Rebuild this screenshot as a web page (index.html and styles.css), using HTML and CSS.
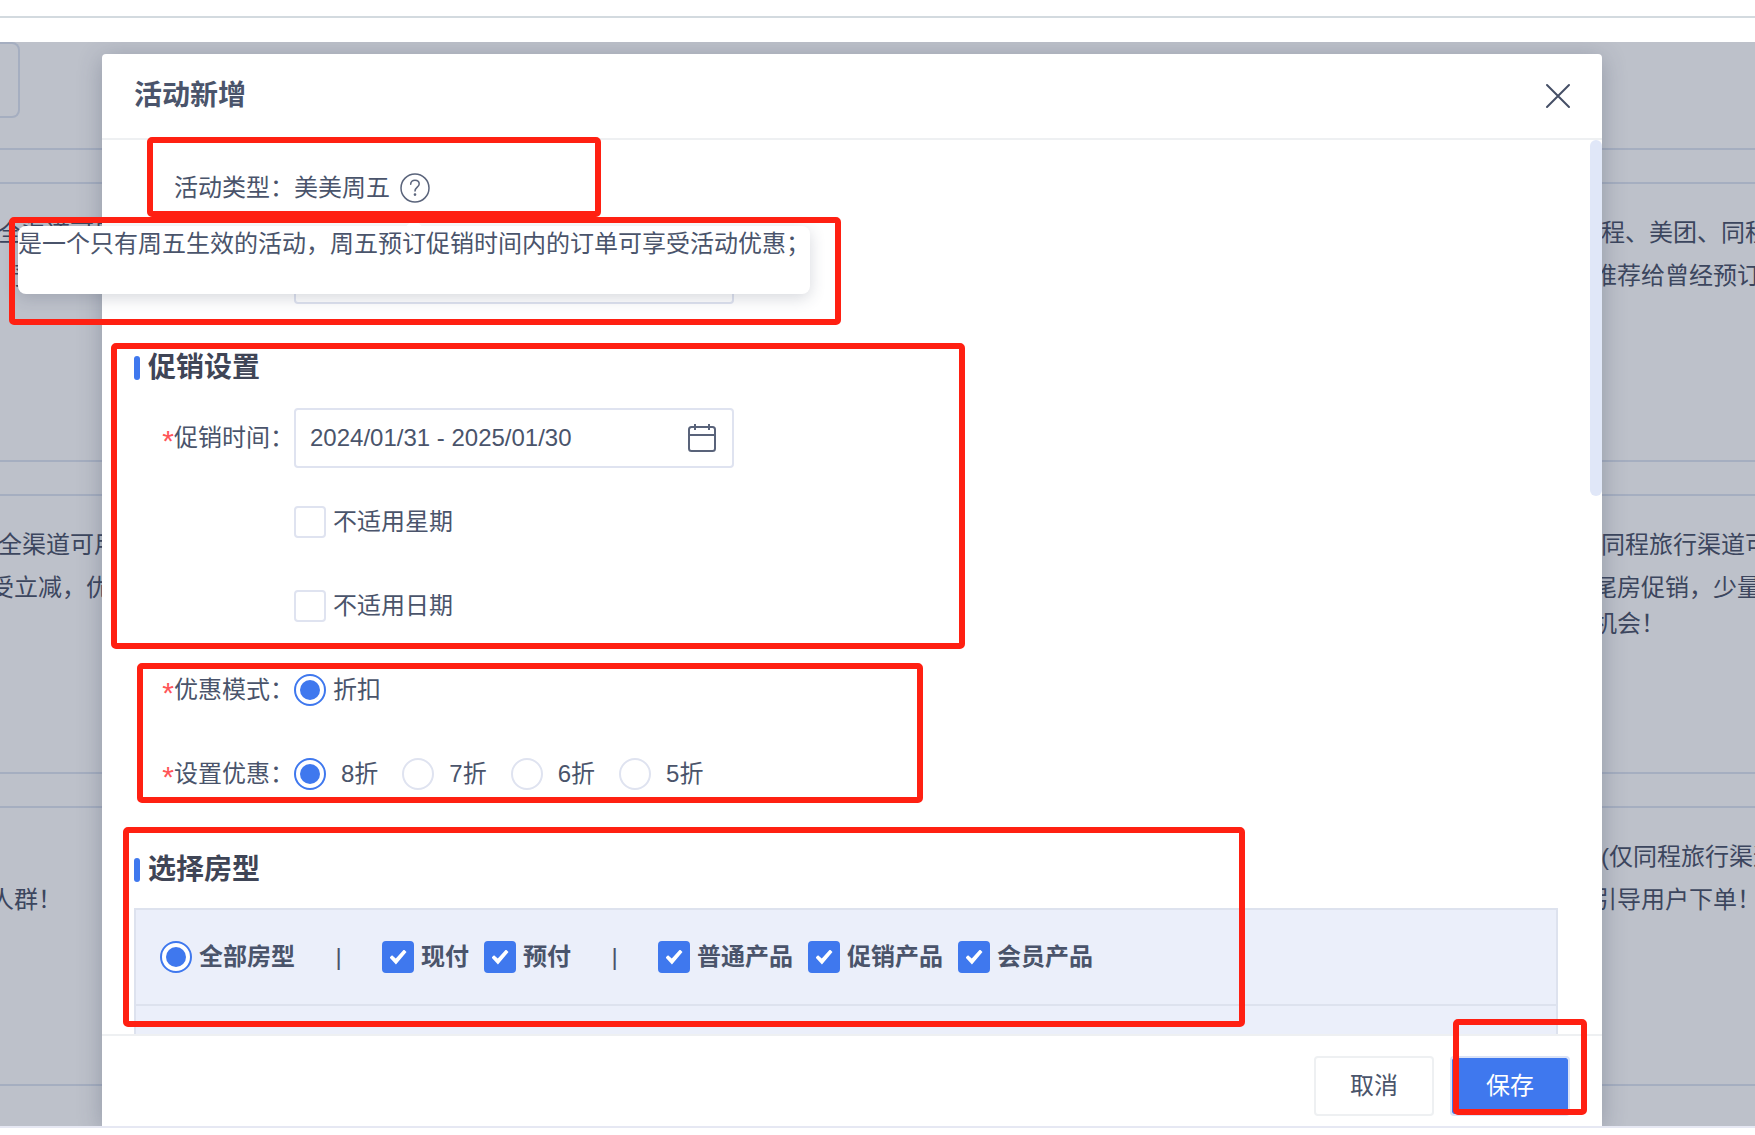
FILE: index.html
```html
<!DOCTYPE html>
<html lang="zh-CN">
<head>
<meta charset="utf-8">
<meta name="viewport" content="width=device-width, initial-scale=1">
<title>活动新增</title>
<link rel="stylesheet" href="styles.css">
</head>
<body>
<div class="page">
  <header class="topbar"></header>
  <main class="stage">
    <div class="backdrop" aria-hidden="true">
      <div class="toolbar"><div class="toolbar-box"></div></div>
      <div class="card-row">
        <article class="card"><h3 class="card-title">全渠道可用</h3><p class="card-text">，预订</p></article>
        <article class="card card-end"><h3 class="card-title">程、美团、同程</h3><p class="card-text">推荐给曾经预订</p></article>
      </div>
      <div class="card-row">
        <article class="card"><h3 class="card-title">全渠道可用</h3><p class="card-text">受立减，优</p></article>
        <article class="card card-end"><h3 class="card-title">同程旅行渠道可</h3><p class="card-text">尾房促销，少量<br>机会！</p></article>
      </div>
      <div class="card-row">
        <article class="card"><h3 class="card-title">&nbsp;</h3><p class="card-text">人群！</p></article>
        <article class="card card-end"><h3 class="card-title">(仅同程旅行渠道</h3><p class="card-text">引导用户下单！</p></article>
      </div>
    </div>

    <section class="modal" role="dialog" aria-labelledby="modal-title">
      <header class="modal-header">
        <h1 class="modal-title" id="modal-title">活动新增</h1>
        <button class="close" type="button" aria-label="关闭">
          <svg width="28" height="28" viewBox="0 0 28 28" fill="none" stroke="#454f66" stroke-width="2" stroke-linecap="round"><path d="M3 3L25 25M25 3L3 25"/></svg>
        </button>
      </header>

      <form class="modal-body" id="activity-form">
        <div class="group group-basic">
          <div class="row">
            <span class="row-label">活动类型：</span>
            <span>美美周五</span>
            <button class="help" type="button" aria-label="说明" aria-describedby="type-tip">
              <svg width="30" height="30" viewBox="0 0 30 30" fill="none" stroke="#5a647b" stroke-width="1.5" stroke-linecap="round"><circle cx="15" cy="15" r="14"/><path d="M10.7 11.300c0-2.600 1.800-4.100 4.300-4.100s4.200 1.500 4.200 3.800c0 3-4.200 3.400-4.200 7"/><circle cx="15" cy="21.600" r=".6" fill="#5a647b"/></svg>
            </button>
          </div>
          <div class="row">
            <span class="row-label"></span>
            <input class="field" type="text" aria-label="活动名称">
          </div>
        </div>

        <section class="promo">
          <h2 class="section-title">促销设置</h2>
          <div class="group">
            <div class="row">
              <label class="row-label" for="promo-date"><span class="required">*</span>促销时间：</label>
              <div class="field date-field">
                <input class="date-input" id="promo-date" type="text" value="2024/01/31 - 2025/01/30">
                <svg width="28" height="28" viewBox="0 0 28 28" fill="none" stroke="#59637a" stroke-width="2"><rect x="1" y="3" width="26" height="24" rx="2.500"/><path d="M1 11H27M7 0V6M21 0V6"/></svg>
              </div>
            </div>
            <div class="row">
              <span class="row-label"></span>
              <label class="choice"><input class="check" type="checkbox">不适用星期</label>
            </div>
            <div class="row">
              <span class="row-label"></span>
              <label class="choice"><input class="check" type="checkbox">不适用日期</label>
            </div>
            <div class="row">
              <span class="row-label"><span class="required">*</span>优惠模式：</span>
              <label class="choice"><input class="radio" type="radio" name="mode" checked>折扣</label>
            </div>
            <div class="row">
              <span class="row-label"><span class="required">*</span>设置优惠：</span>
              <div class="discounts">
                <label class="choice"><input class="radio" type="radio" name="discount" checked>8折</label>
                <label class="choice"><input class="radio" type="radio" name="discount">7折</label>
                <label class="choice"><input class="radio" type="radio" name="discount">6折</label>
                <label class="choice"><input class="radio" type="radio" name="discount">5折</label>
              </div>
            </div>
          </div>
        </section>

        <section class="rooms">
          <h2 class="section-title">选择房型</h2>
          <div class="room-panel">
            <div class="room-filters">
              <label class="choice"><input class="radio" type="radio" name="room" checked>全部房型</label>
              <span class="divider">|</span>
              <div class="filter-set">
                <label class="choice"><input class="check" type="checkbox" checked>现付</label>
                <label class="choice"><input class="check" type="checkbox" checked>预付</label>
              </div>
              <span class="divider">|</span>
              <div class="filter-set">
                <label class="choice"><input class="check" type="checkbox" checked>普通产品</label>
                <label class="choice"><input class="check" type="checkbox" checked>促销产品</label>
                <label class="choice"><input class="check" type="checkbox" checked>会员产品</label>
              </div>
            </div>
            <div class="room-list"></div>
          </div>
        </section>
      </form>
      <div class="scroll-thumb"></div>

      <footer class="modal-footer">
        <button class="btn" type="button">取消</button>
        <button class="btn btn-primary" type="submit" form="activity-form">保存</button>
      </footer>

      <div class="tooltip" id="type-tip" role="tooltip">是一个只有周五生效的活动，周五预订促销时间内的订单可享受活动优惠；</div>
    </section>
  </main>
  <div class="bottombar"></div>

  <div class="mark mark-type"></div>
  <div class="mark mark-tip"></div>
  <div class="mark mark-promo"></div>
  <div class="mark mark-discount"></div>
  <div class="mark mark-rooms"></div>
  <div class="mark mark-save"></div>
</div>
</body>
</html>
```

FILE: styles.css
```css
* { box-sizing: border-box; }

body, h1, h2, h3, p { margin: 0; }

body {
  font-family: "Liberation Sans", "Noto Sans CJK SC", sans-serif;
  font-size: 24px;
  line-height: 36px;
  color: #4a546b;
  background: #fff;
}

button, input { font: inherit; color: inherit; }

.page {
  position: relative;
  display: flex;
  flex-direction: column;
  height: 100vh;
  overflow: hidden;
}

.topbar {
  flex: none;
  height: 42px;
  background: linear-gradient(#d3dadf, #d3dadf) 0 16px / 100% 2px no-repeat;
}

.bottombar {
  flex: none;
  height: 9px;
  border-top: 2px solid #e6e8f3;
}

.stage {
  flex: 1;
  min-height: 0;
  display: grid;
  grid-template: minmax(0, 1fr) / minmax(0, 1fr);
  overflow: hidden;
  background: #bdc1ca;
}

/* dimmed list behind the dialog */
.backdrop {
  grid-area: 1 / 1;
  display: flex;
  flex-direction: column;
  gap: 32px;
  overflow: hidden;
  color: #3c465e;
  white-space: nowrap;
}

.toolbar {
  flex: none;
  height: 108px;
  border-bottom: 2px solid #a5aec0;
}

.toolbar-box {
  width: 20px;
  height: 76px;
  border: 2px solid #a5aec0;
  border-left: 0;
  border-radius: 0 8px 8px 0;
}

.card-row {
  flex: none;
  display: grid;
  grid-template-columns: 1fr 1fr;
  height: 280px;
}

.card {
  border: 2px solid #a5aec0;
  border-width: 2px 0;
  padding-top: 31px;
  overflow: hidden;
}

.card-title {
  margin-left: 8px;
  margin-bottom: 7px;
  font-size: 24px;
  font-weight: 400;
}

.card > * { text-indent: -10px; }

.card-end { padding-left: calc(100% - 162px); }
.card-end > * { text-indent: 0; }

.modal {
  grid-area: 1 / 1;
  position: relative;
  display: flex;
  flex-direction: column;
  min-height: 0;
  margin: 12px 153px 0 102px;
  border-radius: 4px 4px 0 0;
  background: #fff;
  box-shadow: 0 4px 24px rgba(50, 60, 85, .3);
}

.modal-header {
  flex: none;
  display: flex;
  align-items: center;
  justify-content: space-between;
  height: 86px;
  padding: 0 30px 0 32px;
  border-bottom: 2px solid #eef0f2;
}

.modal-title { font-size: 28px; font-weight: 700; }

.close, .help {
  display: flex;
  padding: 0;
  border: 0;
  background: none;
}

.help { margin-left: 10px; }

.modal-body {
  flex: 1;
  min-height: 0;
  padding: 18px 44px 0 32px;
  overflow: hidden;
}

.scroll-thumb {
  position: absolute;
  top: 86px;
  right: 0;
  width: 12px;
  height: 356px;
  border-radius: 6px;
  background: #e0e7f8;
}

.group { display: flex; flex-direction: column; gap: 24px; }
.group-basic { gap: 26px; }

.row { display: flex; align-items: center; height: 60px; }

.row-label {
  display: flex;
  flex: none;
  justify-content: flex-end;
  width: 160px;
}

.required {
  padding-top: 3px;
  height: 36px;
  font-size: 30px;
  line-height: 36px;
  color: #ff5558;
}

.field {
  width: 440px;
  height: 60px;
  border: 2px solid #dfe3f0;
  border-radius: 4px;
  background: #fff;
}

.date-field {
  display: flex;
  align-items: center;
  padding: 0 16px 0 14px;
}

.date-input {
  flex: 1;
  min-width: 0;
  padding: 0;
  border: 0;
  outline: 0;
  background: none;
}

.promo { margin-top: 40px; }
.rooms { margin-top: 42px; }

.section-title {
  display: flex;
  align-items: center;
  gap: 8px;
  margin-bottom: 16px;
  font-size: 28px;
  line-height: 48px;
  color: #3f4556;
}

.rooms .section-title { margin-bottom: 14px; }

.section-title::before {
  content: "";
  width: 6px;
  height: 24px;
  border-radius: 3px;
  background: #3f78ee;
}

.choice { display: flex; align-items: center; gap: 7px; }
.discounts { display: flex; gap: 24px; }
.discounts .choice { gap: 15px; }

.check, .radio {
  appearance: none;
  display: grid;
  place-items: center;
  flex: none;
  width: 32px;
  height: 32px;
  margin: 0;
  border: 2px solid #dfe3f0;
  border-radius: 4px;
  background: #fff;
}

.radio { border-radius: 50%; }
.check:checked { border-color: #3f78ee; background: #3f78ee; }
.radio:checked { border-color: #3f78ee; }

.radio:checked::before {
  content: "";
  width: 20px;
  height: 20px;
  border-radius: 50%;
  background: #3f78ee;
}

.check:checked::before {
  content: "";
  width: 17px;
  height: 15px;
  background: #fff;
  clip-path: polygon(0 54%, 15% 38%, 37% 60%, 85% 0, 100% 16%, 38% 100%);
}

.room-panel {
  border: 2px solid #dde2ee;
  border-bottom: 0;
  background: #ebeffa;
}

.room-filters {
  display: flex;
  align-items: center;
  height: 96px;
  padding: 0 24px;
  border-bottom: 2px solid #dde2ee;
  font-weight: 700;
}

.divider { width: 87px; text-align: center; font-weight: 400; }
.filter-set { display: flex; gap: 15px; }
.room-list { height: 96px; }

.modal-footer {
  flex: none;
  display: flex;
  justify-content: flex-end;
  gap: 16px;
  height: 92px;
  padding: 20px 32px 0;
  border-top: 2px solid #eef0f2;
}

.btn {
  width: 120px;
  height: 60px;
  padding: 0;
  border: 2px solid #eef0f2;
  border-radius: 4px;
  background: #fff;
}

.btn-primary {
  border-color: #dbe3f6;
  color: #fff;
  background: #3f78ee;
  background-clip: padding-box;
}

.tooltip {
  position: absolute;
  top: 172px;
  left: -84px;
  padding-bottom: 32px;
  border-radius: 8px;
  background: #fff;
  box-shadow: 0 4px 16px rgba(50, 60, 85, .2);
  white-space: nowrap;
}

.tooltip::before {
  content: "";
  position: absolute;
  top: -5px;
  left: 390px;
  width: 12px;
  height: 12px;
  background: #fff;
  transform: rotate(45deg);
}

/* review annotations */
.mark {
  position: absolute;
  border: 6px solid #ff2012;
  border-radius: 5px;
  pointer-events: none;
}

.mark-type { left: 147px; top: 137px; width: 454px; height: 80px; }
.mark-tip { left: 9px; top: 217px; width: 832px; height: 108px; }
.mark-promo { left: 111px; top: 343px; width: 854px; height: 306px; }
.mark-discount { left: 137px; top: 663px; width: 786px; height: 140px; }
.mark-rooms { left: 123px; top: 827px; width: 1122px; height: 200px; }
.mark-save { right: 168px; bottom: 20px; width: 134px; height: 96px; }
```
